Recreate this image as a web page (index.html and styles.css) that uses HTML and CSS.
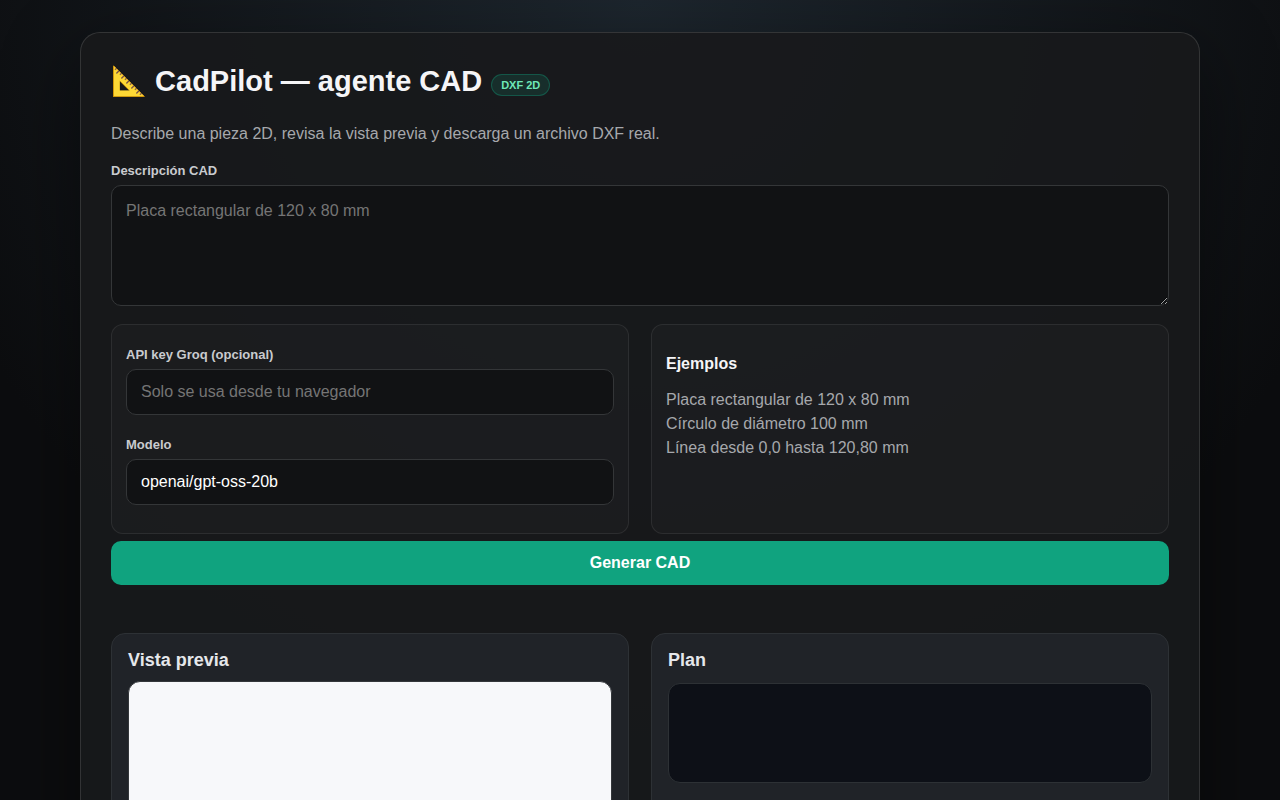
FILE: index.html
```html
<!DOCTYPE html>
<html lang="es">
  <head>
    <meta charset="UTF-8" />
    <meta name="viewport" content="width=device-width, initial-scale=1.0" />
    <title>CadPilot — agente CAD</title>
    <link rel="stylesheet" href="styles.css">
  </head>
  <body>
    <main class="app">
      <!-- Cabecera -->
      <header class="app-header">
        <h1>📐 CadPilot — agente CAD</h1>
        <span class="badge">DXF 2D</span>
      </header>
      <p class="intro">Describe una pieza 2D, revisa la vista previa y descarga un archivo DXF real.</p>

      <!-- Formulario -->
      <form class="cad-form">
        <div class="field">
          <label for="prompt">Descripción CAD</label>
          <textarea id="prompt" placeholder="Placa rectangular de 120 x 80 mm"></textarea>
        </div>
        <div class="grid options">
          <div class="panel">
            <div class="field">
              <label for="apiKey">API key Groq (opcional)</label>
              <input id="apiKey" type="password" placeholder="Solo se usa desde tu navegador" />
            </div>
            <div class="field">
              <label for="model">Modelo</label>
              <input id="model" type="text" value="openai/gpt-oss-20b" />
            </div>
          </div>
          <div class="panel examples">
            <h3>Ejemplos</h3>
            <p>
              Placa rectangular de 120 x 80 mm<br />
              Círculo de diámetro 100 mm<br />
              Línea desde 0,0 hasta 120,80 mm
            </p>
          </div>
        </div>
        <button class="generate" type="button">Generar CAD</button>
      </form>

      <!-- Resultados -->
      <section class="grid results">
        <div class="card">
          <h2>Vista previa</h2>
          <div class="preview"></div>
        </div>
        <div class="card">
          <h2>Plan</h2>
          <pre class="plan"></pre>
        </div>
      </section>
    </main>
  </body>
</html>
```
FILE: styles.css
```css
* {
  box-sizing: border-box;
}
:root {
  --line: rgba(255, 255, 255, 0.12);
  --text: #f5f5f7;
  --muted: #a6a8ac;
  --green: #10a37f;
}
body {
  margin: 0;
  padding: 32px 20px;
  min-height: 100vh;
  font-family: "Liberation Sans", Arial, sans-serif;
  font-size: 16px;
  line-height: 25px;
  color: var(--text);
  background: #0c0d0f radial-gradient(circle at top, #1d262e 0, #0c0d0f 740px) no-repeat;
}
h1,
h2,
h3,
p,
pre {
  margin: 0;
}

/* Contenedor principal */
.app {
  max-width: 1120px;
  margin: 0 auto;
  padding: 30px;
  border: 1px solid var(--line);
  border-radius: 20px;
  background: rgba(24, 25, 27, 0.92);
  box-shadow: 0 24px 80px rgba(0, 0, 0, 0.45);
}
.app-header {
  display: flex;
  align-items: flex-end;
  gap: 9px;
}
.app-header h1 {
  font-size: 29px;
  line-height: 36px;
}
.badge {
  margin-bottom: 3px;
  padding: 0 9px;
  border: 1px solid rgba(16, 163, 127, 0.35);
  border-radius: 999px;
  background: rgba(16, 163, 127, 0.16);
  color: #6ee7b7;
  font-size: 11px;
  font-weight: bold;
  line-height: 20px;
}
.intro {
  margin: 22px 0 9px;
  color: var(--muted);
}

/* Campos */
.field {
  padding: 6px 0 14px;
}
label {
  display: block;
  margin-bottom: 4px;
  color: #c9cbcf;
  font-size: 13px;
  font-weight: bold;
  line-height: 20px;
}
input,
textarea {
  display: block;
  width: 100%;
  padding: 12px 14px;
  border: 1px solid #343638;
  border-radius: 10px;
  background: #111214;
  color: #fff;
  font: inherit;
  outline: none;
}
input {
  height: 46px;
}
textarea {
  height: 121px;
  resize: vertical;
}
input:focus,
textarea:focus {
  border-color: var(--green);
}

.grid {
  display: grid;
  grid-template-columns: 1fr 1fr;
  gap: 22px;
}
.options {
  margin-top: 4px;
}
.panel {
  padding: 14px;
  border: 1px solid rgba(255, 255, 255, 0.08);
  border-radius: 12px;
  background: rgba(255, 255, 255, 0.02);
}
.examples h3 {
  margin: 12px 0;
  font-size: 16px;
}
.examples p {
  color: var(--muted);
  line-height: 24px;
}
.generate {
  display: block;
  width: 100%;
  margin-top: 7px;
  padding: 10px 14px;
  border: 0;
  border-radius: 10px;
  background: var(--green);
  color: #fff;
  font: inherit;
  font-weight: bold;
  line-height: 24px;
  cursor: pointer;
}
.generate:hover {
  background: #0e8f70;
}

/* Resultados */
.results {
  margin-top: 48px;
}
.card {
  padding: 16px;
  border: 1px solid #2d3135;
  border-radius: 14px;
  background: #202328;
}
.card h2 {
  color: #e5e7eb;
  font-size: 18px;
  line-height: 20px;
}
.preview {
  height: 420px;
  margin-top: 11px;
  border: 1px solid #34373b;
  border-radius: 12px;
  background: #f7f8fa;
}
.plan {
  min-height: 100px;
  margin-top: 13px;
  padding: 14px;
  border: 1px solid #2d3135;
  border-radius: 12px;
  background: #0d1017;
  overflow: auto;
}

@media (max-width: 760px) {
  .grid {
    grid-template-columns: 1fr;
  }
}
```
